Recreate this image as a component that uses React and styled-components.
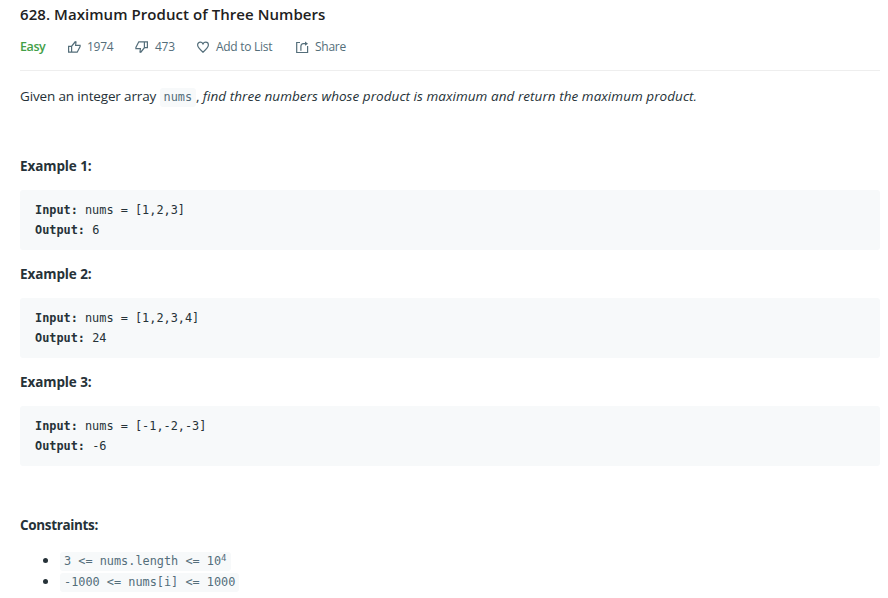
import React from "react";
import styled, { createGlobalStyle } from "styled-components";

const Global = createGlobalStyle`
  *, *::before, *::after { box-sizing: border-box; }
  body {
    margin: 0;
    background: #fff;
    color: #263238;
    font: 13.5px/20px "Open Sans", "Noto Sans", sans-serif;
    overflow: hidden;
  }
`;

const mono = `font-family: "DejaVu Sans Mono", "Liberation Mono", monospace;`;

const Page = styled.main`
  display: flex;
  flex-direction: column;
  height: 598px;
  padding: 0 8px 0 20px;
`;

const Title = styled.h1`
  margin: 2px 0 1px;
  color: #212121;
  font-size: 15px;
  font-weight: 600;
  line-height: 24px;
  letter-spacing: 0.06px;
`;

const Toolbar = styled.div`
  display: flex;
  align-items: center;
  height: 44px;
  padding-bottom: 4px;
  border-bottom: 1px solid #eee;
  font-size: 12px;
`;

const Difficulty = styled.span`
  width: 47px;
  margin-top: 1px;
  color: #43a047;
  font-size: 12.5px;
  font-weight: 600;
  letter-spacing: -0.4px;
`;

const Action = styled.button`
  display: flex;
  align-items: center;
  gap: 6px;
  width: ${(p) => p.$width}px;
  padding: 0;
  border: 0;
  background: none;
  color: #546e7a;
  font: inherit;
  letter-spacing: -0.28px;
  white-space: nowrap;
`;

const Icon = styled.svg`
  width: 14px;
  height: 14px;
  flex: none;
  fill: none;
  stroke: currentColor;
  stroke-width: 1.2;
`;

const Statement = styled.p`
  margin: 15px 0 0;
  height: 21px;
  line-height: 21px;
  letter-spacing: -0.15px;
  white-space: nowrap;
`;

const Emphasis = styled.em`
  letter-spacing: 0.05px;
`;

const Code = styled.code`
  ${mono}
  display: inline-block;
  height: 19px;
  padding: 0 4px;
  border-radius: 3px;
  background: #f7f9fa;
  color: #546e7a;
  font-size: 11.87px;
  line-height: 19px;
  letter-spacing: 0;
  white-space: pre;

  sup {
    font-size: 9px;
    line-height: 0;
    vertical-align: 4px;
  }
`;

const Heading = styled.h2`
  margin: ${(p) => p.$top}px 0 0;
  font-size: 13.5px;
  font-weight: 700;
  line-height: 20px;
  letter-spacing: ${(p) => p.$spacing ?? -0.1}px;
`;

const Sample = styled.pre`
  ${mono}
  margin: 14px 0 0;
  height: 60px;
  padding: 10px 15px;
  border-radius: 3px;
  background: #f7f9fa;
  font-size: 11.87px;
  line-height: 20px;
`;

const List = styled.ul`
  margin: 16px 0 0;
  padding: 0;
  list-style: none;
`;

const Item = styled.li`
  display: flex;
  align-items: center;
  height: 21px;
  padding-left: 23px;

  &::before {
    content: "";
    width: 5px;
    height: 5px;
    margin: 0 12px 2px 0;
    border-radius: 50%;
    background: #263238;
  }
`;

const examples = [
  { input: "nums = [1,2,3]", output: "6", top: 49 },
  { input: "nums = [1,2,3,4]", output: "24", top: 14 },
  { input: "nums = [-1,-2,-3]", output: "-6", top: 14 },
];

const thumb =
  "M4.6 6.3H1.6v5.9h3M4.6 6.3v5.9h5.6L13.1 6.6V5.3H8.6L9 2 8.2 1.8 4.6 6.3z";

export default function App() {
  return (
    <>
      <Global />
      <Page>
        <Title>628. Maximum Product of Three Numbers</Title>
        <Toolbar>
          <Difficulty>Easy</Difficulty>
          <Action $width={68}>
            <Icon viewBox="0 0 14 14"><path d={thumb} /></Icon>1974
          </Action>
          <Action $width={61}>
            <Icon viewBox="0 0 14 14"><path d={thumb} transform="rotate(180 7 7)" /></Icon>473
          </Action>
          <Action $width={99}>
            <Icon viewBox="0 0 14 14">
              <path d="M7 12.2C3.4 9 1.6 7.3 1.6 5c0-1.7 1.2-2.8 2.7-2.8 1.2 0 2.2.6 2.7 1.7.5-1.1 1.5-1.7 2.7-1.7 1.5 0 2.7 1.1 2.7 2.8C12.4 7.3 10.6 9 7 12.2z" />
            </Icon>Add to List
          </Action>
          <Action $width={60}>
            <Icon viewBox="0 0 14 14">
              <path d="M5 2.5H1.7v10h10.9V6M5.9 10.7V6.2c0-1.6.8-2.5 2.4-2.5h3" />
              <path d="M10 1.6 13 3.7 10 5.8z" fill="currentColor" stroke="none" />
            </Icon>Share
          </Action>
        </Toolbar>
        <Statement>
          Given an integer array <Code>nums</Code>, <Emphasis>find three numbers whose product is maximum and return the maximum product.</Emphasis>
        </Statement>
        {examples.map(({ input, output, top }, i) => (
          <React.Fragment key={input}>
            <Heading $top={top}>Example {i + 1}:</Heading>
            <Sample>
              <b>Input:</b> {input}{"\n"}
              <b>Output:</b> {output}
            </Sample>
          </React.Fragment>
        ))}
        <Heading $top={49} $spacing={-0.35}>Constraints:</Heading>
        <List>
          <Item><Code>{"3 <= nums.length <= 10"}<sup>4</sup></Code></Item>
          <Item><Code>{"-1000 <= nums[i] <= 1000"}</Code></Item>
        </List>
      </Page>
    </>
  );
}
